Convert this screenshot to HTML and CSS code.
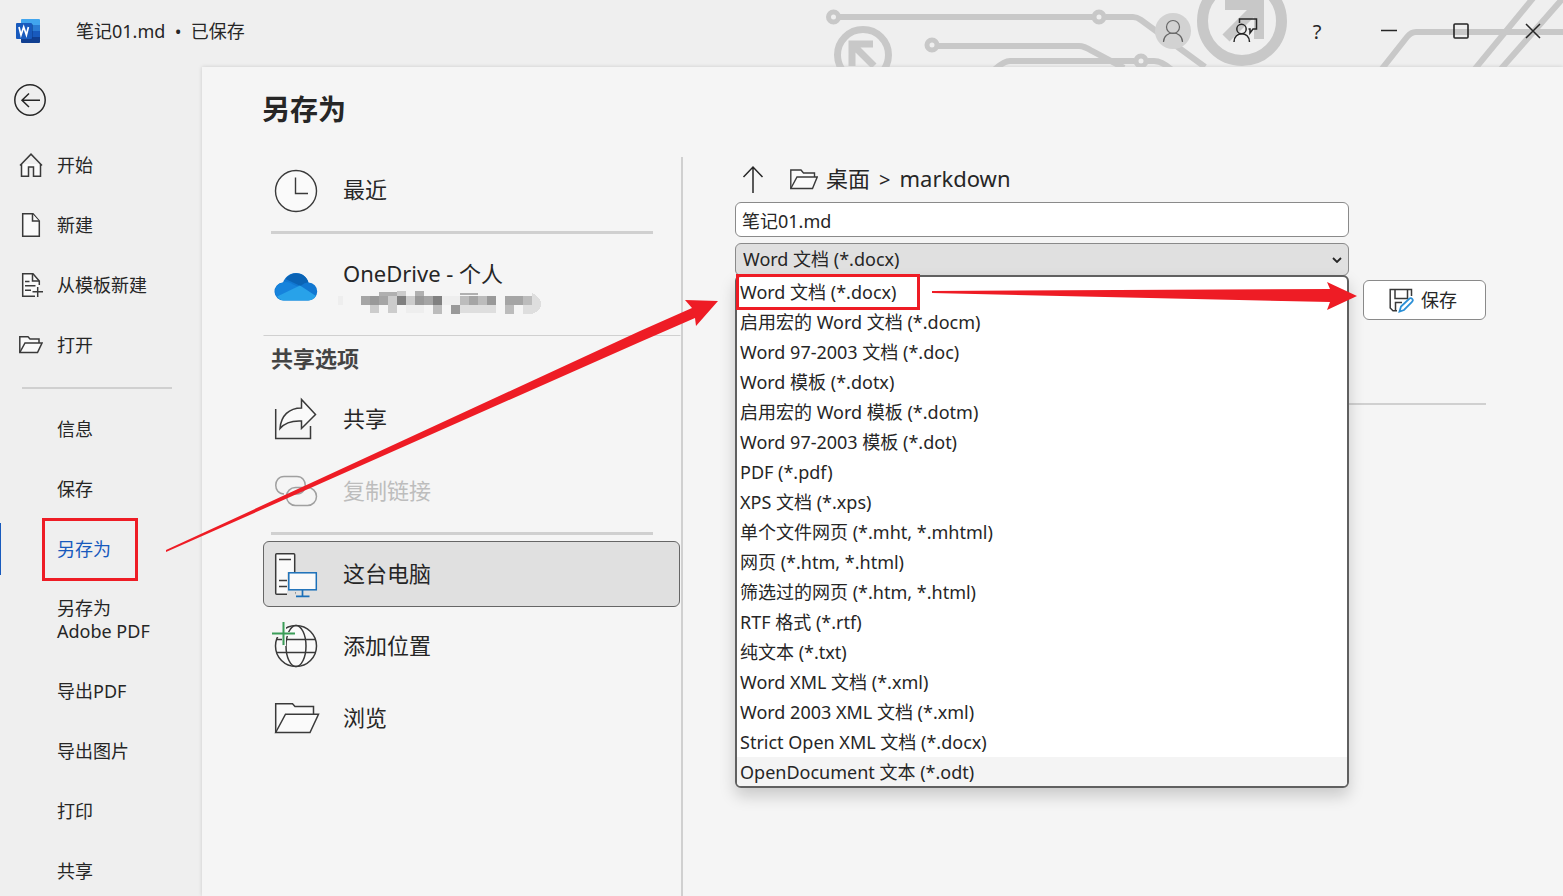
FILE: index.html
```
<!DOCTYPE html>
<html lang="zh-CN">
<head>
  <meta charset="UTF-8">
  <title>另存为</title>
  <link rel="stylesheet" href="styles.css">
</head>
<body>
  <header class="titlebar">
    <svg class="circuit" width="763" height="67" viewBox="800 0 763 67" fill="none" stroke="#c8c8c8" stroke-width="6">
      <path d="M840 17H1092M1106 17H1133Q1137 17 1141 20L1205 67"/>
      <path d="M938 46H1079Q1084 46 1092 51L1124 68"/>
      <path d="M994 70Q1004 61 1010 61H1134M1148 61H1154Q1162 61 1172 70"/>
      <circle cx="833.500" cy="17" r="5" stroke-width="5"/>
      <circle cx="1099" cy="17" r="5" stroke-width="5"/>
      <circle cx="932" cy="45" r="5" stroke-width="5"/>
      <circle cx="1141" cy="61" r="5" stroke-width="5"/>
      <circle cx="863" cy="55" r="25.500" stroke-width="7"/>
      <path d="M873 44H852V66M854 46L874 66" stroke-width="7"/>
      <circle cx="1242" cy="21" r="39.500" stroke-width="11"/>
      <path d="M1225 5H1259V39M1256 8L1226 38" stroke-width="10"/>
      <path d="M1381 70L1407 37Q1411 32 1416 32H1563M1474 70L1534 -3M1500 70L1564 -3"/>
    </svg>
    <svg class="word-logo" width="24" height="24" viewBox="0 0 24 24">
      <path d="M6 0h17a1 1 0 0 1 1 1v5H5V1a1 1 0 0 1 1-1z" fill="#41a5ee"/>
      <path d="M5 6h19v6H5z" fill="#2b7cd3"/>
      <path d="M5 12h19v6H5z" fill="#185abd"/>
      <path d="M5 18h19v5a1 1 0 0 1-1 1H6a1 1 0 0 1-1-1z" fill="#103f91"/>
      <path d="M5 5h11a1 1 0 0 1 1 1v14H5z" fill="#0b3a85" opacity=".5"/>
      <rect y="4" width="16" height="16" rx="1" fill="#185abd"/>
      <path d="M3 8l2 8 2.700-8 2.700 8 2-8" fill="none" stroke="#fff" stroke-width="1.700"/>
    </svg>
    <span class="doc-name">笔记01.md&nbsp; •&nbsp; 已保存</span>
    <div class="window-buttons">
      <button class="avatar" aria-label="账户">
        <svg width="36" height="36" viewBox="0 0 36 36" fill="none" stroke="#666" stroke-width="1.200"><circle cx="18" cy="14" r="6.500"/><path d="M8.500 29c0-12 19-12 19 0"/></svg>
      </button>
      <button aria-label="反馈">
        <svg width="36" height="36" viewBox="0 0 36 36" fill="none" stroke="#262626" stroke-width="1.500"><circle cx="14.500" cy="16" r="4.700"/><path d="M7 29c0-11 15.500-11 15.500 0"/><path d="M12.500 10V6H29.500V16H26L23 20V16H21.500"/></svg>
      </button>
      <button class="help" aria-label="帮助">?</button>
      <button aria-label="最小化">
        <svg width="36" height="36" viewBox="0 0 36 36" stroke="#262626" stroke-width="1.500"><path d="M10 17.500H26"/></svg>
      </button>
      <button aria-label="最大化">
        <svg width="36" height="36" viewBox="0 0 36 36" fill="none" stroke="#262626" stroke-width="1.600"><rect x="11" y="11" width="14" height="14" rx="1"/></svg>
      </button>
      <button aria-label="关闭">
        <svg width="36" height="36" viewBox="0 0 36 36" stroke="#262626" stroke-width="1.500"><path d="M11 11L25 25M25 11L11 25"/></svg>
      </button>
    </div>
  </header>

  <div class="backstage">
    <nav class="sidebar">
      <button class="back" aria-label="返回">
        <svg width="32" height="32" viewBox="0 0 32 32" fill="none" stroke="#262626" stroke-width="1.500"><circle cx="16" cy="16" r="15.200"/><path d="M26 16.300H8M15 9.500L8 16.300L15 23"/></svg>
      </button>
      <a href="#" class="nav-item">
        <svg width="24" height="24" viewBox="0 0 24 24" fill="#fafafa" stroke="#3a3a3a" stroke-width="1.500"><path d="M2.500 11V23.200H9.500V14H14.500V23.200H21.500V11"/><path d="M1 12.500L12 1.200L23 12.500" fill="none"/></svg>
        开始
      </a>
      <a href="#" class="nav-item">
        <svg width="24" height="24" viewBox="0 0 24 24" fill="#fafafa" stroke="#3a3a3a" stroke-width="1.500"><path d="M3.700 .800H14L20.300 8V23.200H3.700z"/><path d="M13.500 1V8H20"/></svg>
        新建
      </a>
      <a href="#" class="nav-item">
        <svg width="24" height="24" viewBox="0 0 24 24" fill="none" stroke="#3a3a3a" stroke-width="1.500"><path d="M3.700 .800H14L20.300 8V23.200H3.700z" fill="#fafafa" stroke="none"/><path d="M16 23.200H3.700V.800H14L20.300 8V12"/><path d="M13.500 1V8H20M6 8.500H10.500M6 12.700H16.500M6 17.300H12"/><path d="M18.700 14V24M13.500 18.700H24"/></svg>
        从模板新建
      </a>
      <a href="#" class="nav-item">
        <svg width="24" height="24" viewBox="0 0 24 24" fill="#fafafa" stroke="#3a3a3a" stroke-width="1.500"><path d="M.800 19.500V3.800H9L11 6H20V10"/><path d="M.800 19.500L6 10H23L18.500 19.500z"/></svg>
        打开
      </a>
      <hr>
      <a href="#" class="nav-item">信息</a>
      <a href="#" class="nav-item">保存</a>
      <a href="#" class="nav-item selected">另存为</a>
      <a href="#" class="nav-item two-lines">另存为<br>Adobe PDF</a>
      <a href="#" class="nav-item">导出PDF</a>
      <a href="#" class="nav-item">导出图片</a>
      <a href="#" class="nav-item">打印</a>
      <a href="#" class="nav-item">共享</a>
    </nav>

    <main class="content">
      <h1>另存为</h1>
      <div class="columns">
        <section class="places">
          <button class="place">
            <svg width="48" height="48" viewBox="0 0 48 48" fill="none" stroke="#3a3a3a" stroke-width="1.400"><circle cx="24" cy="25" r="20.500" fill="#fafafa"/><path d="M23.500 11.500V27.500H36"/></svg>
            最近
          </button>
          <hr>
          <button class="place onedrive">
            <svg width="48" height="48" viewBox="0 0 48 48">
              <path d="M12 36.500a9 9 0 0 1-1-18C13 13 18 9 24 9c6 0 11 4 12.500 9.500a9 9 0 0 1-.500 18z" fill="#1177d1"/>
              <path d="M13.500 15c6-9 20-7 23 3.500-3 0-5 1-8 3.500L13.500 15z" fill="#0a63b5"/>
              <path d="M11 18.500c4-1 7 0 10 2l6 2.500-22 9.500c-4-6-1-13 6-14z" fill="#1683dc"/>
              <path d="M5 32.500L28 21.500l16 10.500c-2 3-5 4.500-8 4.500H12c-3 0-5-1.500-7-4z" fill="#28a2e9"/>
            </svg>
            <span class="account">
              OneDrive - 个人
              <svg width="204" height="24" viewBox="338 291 204 24" shape-rendering="crispEdges">
                <path fill="#eee" d="M338 296h5v9h-5zM442 296h18v9h-18zM406 305h18v8h-18z"/>
                <path fill="#b0b0b0" d="M379 292h18v4h-18zM415 291h9v5h-9zM460 293h18v2h-18z"/>
                <path fill="#ccc" d="M397 291h9v5h-9zM388 296h9v9h-9zM406 296h9v9h-9zM370 305h9v8h-9zM388 305h9v8h-9z"/>
                <path fill="#a5a5a5" d="M361 296h9v9h-9zM379 296h9v9h-9zM424 296h9v9h-9zM469 296h9v9h-9zM505 296h18v9h-18z"/>
                <path fill="#999" d="M370 296h9v9h-9zM415 296h9v9h-9zM487 296h9v9h-9zM451 305h9v9h-9z"/>
                <path fill="#808080" d="M397 296h9v9h-9zM433 296h9v9h-9z"/>
                <path fill="#bcbcbc" d="M460 296h9v9h-9zM478 296h9v9h-9zM523 296h9v9h-9zM433 305h9v9h-9zM505 305h9v9h-9z"/>
                <path fill="#dedede" d="M460 305h36v8h-36zM523 305h9v9h-9zM532 293q9 4 9 11t-9 10z"/>
              </svg>
            </span>
          </button>
          <h2>共享选项</h2>
          <button class="place">
            <svg width="48" height="48" viewBox="0 0 48 48" fill="none" stroke="#3a3a3a" stroke-width="1.500"><path d="M3.700 14V43.500H38.500V31"/><path d="M8 33.500C9 20.500 17 13 29.500 13V4.500L43.500 19.500L29.500 33.500V26C20 25.500 13 27.500 8 33.500z" fill="#fafafa"/></svg>
            共享
          </button>
          <button class="place" disabled>
            <svg width="48" height="48" viewBox="0 0 48 48" fill="none" stroke="#a0a0a0" stroke-width="1.500"><path d="M12 27C1 27 1 9.500 12 9.500H25C36 9.500 36 27 25 27H20"/><rect x="14.500" y="20.500" width="30" height="18" rx="9"/></svg>
            复制链接
          </button>
          <hr>
          <button class="place current">
            <svg width="48" height="48" viewBox="0 0 48 48" fill="#fafafa" stroke="#3a3a3a" stroke-width="1.500"><rect x="3.700" y="3.700" width="19" height="40.500" rx="1"/><path d="M7 9.500H19M7 30.500H15M7 36.500H15"/><path d="M15 22h30v20h-22v4h-8z" fill="#e0e0e0" stroke="none"/><rect x="16.800" y="22.800" width="27.500" height="17" stroke="#1a6fb8"/><path d="M30.500 40V46M24 46.300H37.500" stroke="#1a6fb8" stroke-width="1.700"/></svg>
            这台电脑
          </button>
          <button class="place">
            <svg width="48" height="48" viewBox="0 0 48 48" fill="none" stroke="#3a3a3a" stroke-width="1.500"><circle cx="24" cy="24" r="20.500" fill="#fafafa"/><ellipse cx="24" cy="24" rx="10" ry="20.500"/><path d="M5 17.500H43M5 30.500H43"/><path d="M0 0H14V10H22V14H14V24H10V15H0z" fill="#f5f5f5" stroke="none"/><path d="M11.500 0V23M0 11.500H23" stroke="#3b9d58" stroke-width="2"/></svg>
            添加位置
          </button>
          <button class="place">
            <svg width="48" height="48" viewBox="0 0 48 48" fill="#fafafa" stroke="#3a3a3a" stroke-width="1.500"><path d="M3.700 38.500V9.700H20.500L23 12.500H41.500V20"/><path d="M3.700 38.500L13.500 20.200H46.500L38 38.500z"/></svg>
            浏览
          </button>
        </section>

        <section class="save-panel">
          <div class="path">
            <button class="up" aria-label="上一级">
              <svg width="24" height="32" viewBox="0 0 24 32" fill="none" stroke="#262626" stroke-width="1.500"><path d="M12 29V3M2.500 13L12 3L21.500 13"/></svg>
            </button>
            <svg width="28" height="22" viewBox="0 0 28 22" fill="#fafafa" stroke="#3a3a3a" stroke-width="1.400"><path d="M.800 19.500V1H11L13.500 4H24.500V8"/><path d="M.800 19.500L7 8H27.200L22.500 19.500z"/></svg>
            <span class="path-text">桌面<span class="sep">&gt;</span>markdown</span>
          </div>
          <div class="save-row">
            <div class="fields">
              <input type="text" value="笔记01.md" aria-label="文件名">
              <div class="type-box">
                <select aria-label="保存类型">
                  <option>Word 文档 (*.docx)</option>
                </select>
                <svg class="chevron" width="10" height="6" viewBox="0 0 10 6" fill="none" stroke="#262626" stroke-width="1.800"><path d="M1 1L5 5L9 1"/></svg>
                <ul class="type-list" role="listbox" aria-label="保存类型">
                  <li role="option" class="marked">Word 文档 (*.docx)</li>
                  <li role="option">启用宏的 Word 文档 (*.docm)</li>
                  <li role="option">Word 97-2003 文档 (*.doc)</li>
                  <li role="option">Word 模板 (*.dotx)</li>
                  <li role="option">启用宏的 Word 模板 (*.dotm)</li>
                  <li role="option">Word 97-2003 模板 (*.dot)</li>
                  <li role="option">PDF (*.pdf)</li>
                  <li role="option">XPS 文档 (*.xps)</li>
                  <li role="option">单个文件网页 (*.mht, *.mhtml)</li>
                  <li role="option">网页 (*.htm, *.html)</li>
                  <li role="option">筛选过的网页 (*.htm, *.html)</li>
                  <li role="option">RTF 格式 (*.rtf)</li>
                  <li role="option">纯文本 (*.txt)</li>
                  <li role="option">Word XML 文档 (*.xml)</li>
                  <li role="option">Word 2003 XML 文档 (*.xml)</li>
                  <li role="option">Strict Open XML 文档 (*.docx)</li>
                  <li role="option" class="hover">OpenDocument 文本 (*.odt)</li>
                </ul>
              </div>
            </div>
            <button class="save">
              <svg width="25" height="25" viewBox="0 0 25 25" fill="none" stroke="#3a3a3a" stroke-width="1.500"><path d="M22.500 8V1.500H1.200V20L4 22.700H8"/><path d="M6 1.500V10.500H18.500V1.500M6.500 22V14.500H13"/><path d="M10.500 23.500L12 18.500L20.500 10.500Q22 9.500 23.300 11Q24.500 12.500 23 13.800L15 22z" fill="#fff" stroke="#2b8fd6" stroke-width="1.800"/></svg>
              保存
            </button>
          </div>
        </section>
      </div>
    </main>
  </div>

  <svg class="arrows" width="1563" height="896" viewBox="0 0 1563 896" fill="#ee1c25">
    <path d="M166 550L640 331L692 308L685 300L718 301L696 326L695 318L640 342L166 552z"/>
    <path d="M932 291L1330 289L1327 282L1357 296L1327 310L1330 302L932 293z"/>
  </svg>
</body>
</html>
```
FILE: styles.css
```
*,
*::before,
*::after {
  box-sizing: border-box;
}

body {
  margin: 0;
  height: 100vh;
  overflow: hidden;
  display: flex;
  flex-direction: column;
  position: relative;
  background: #efefef;
  color: #262626;
  font-family: "Noto Sans", "Noto Sans CJK SC", sans-serif;
  font-size: 18px;
}

button,
input,
select {
  font: inherit;
  color: inherit;
}

button {
  padding: 0;
  border: none;
  background: none;
}

svg {
  display: block;
  flex: none;
}

hr {
  margin: 0;
  border: none;
  background: #d0d0d0;
}

/* title bar */
.titlebar {
  position: relative;
  height: 67px;
  flex: none;
  display: flex;
  align-items: center;
  padding: 0 12px 5px 16px;
}

.circuit {
  position: absolute;
  top: 0;
  right: 0;
}

.doc-name {
  margin: 0 0 2px 36px;
}

.window-buttons {
  position: relative;
  margin-left: auto;
  display: flex;
  gap: 36px;
}

.window-buttons button {
  width: 36px;
  height: 36px;
}

.window-buttons .avatar {
  border-radius: 50%;
  background: #d2d2d2;
}

.window-buttons .help {
  font-size: 20px;
}

/* sidebar */
.backstage {
  flex: 1;
  min-height: 0;
  display: flex;
}

.sidebar {
  width: 202px;
  flex: none;
  padding-top: 17px;
  overflow: hidden;
}

.back {
  display: block;
  margin: 0 0 19px 14px;
}

.nav-item {
  position: relative;
  display: flex;
  align-items: center;
  gap: 14px;
  height: 60px;
  padding: 0 0 2px 19px;
  color: inherit;
  text-decoration: none;
}

.nav-item svg {
  margin-top: 2px;
}

.sidebar hr {
  height: 2px;
  margin: 12px 30px 10px 22px;
}

.sidebar hr ~ .nav-item {
  padding-left: 57px;
}

.nav-item.two-lines {
  display: block;
  height: 82px;
  padding-top: 18px;
  line-height: 23px;
}

.nav-item.selected {
  color: #185abd;
}

.nav-item.selected::before {
  content: "";
  position: absolute;
  left: 0;
  top: 4px;
  width: 1px;
  height: 52px;
  background: #185abd;
}

.nav-item.selected::after {
  content: "";
  position: absolute;
  left: 42px;
  top: -1px;
  width: 96px;
  height: 63px;
  border: 3px solid #ee1c25;
}

/* content */
.content {
  flex: 1;
  min-width: 0;
  display: flex;
  flex-direction: column;
  padding: 22px 77px 0 60px;
  background: #f5f5f5;
  box-shadow: 0 0 4px rgba(0, 0, 0, 0.15);
}

h1 {
  margin: 0 0 28px;
  font-size: 28px;
  line-height: 40px;
}

.columns {
  flex: 1;
  min-height: 0;
  display: flex;
}

.places {
  width: 421px;
  flex: none;
  border-right: 2px solid #d0d0d0;
  font-size: 22px;
}

.place {
  width: 417px;
  height: 66px;
  margin: 0 0 6px 1px;
  padding: 0 0 4px 8px;
  display: flex;
  align-items: center;
  gap: 23px;
  border: 1px solid transparent;
  border-radius: 6px;
  text-align: left;
}

.place > svg {
  margin-top: 4px;
}

.place:disabled {
  color: #bdbdbd;
}

.place.current {
  border-color: #666;
  background: #e0e0e0;
}

.places hr {
  height: 3px;
  margin: 8px 28px 6px 9px;
}

.place.onedrive {
  width: 418px;
  height: 96px;
  margin-bottom: 0;
  border-bottom: 1px solid #d0d0d0;
  border-radius: 0;
}

.account {
  line-height: 32px;
}

.account svg {
  margin: 2px 0 0 -5px;
}

h2 {
  margin: 0 0 6px 9px;
  font-size: 22px;
  line-height: 44px;
  color: #444;
}

.save-panel {
  flex: 1;
  min-width: 0;
  padding-left: 52px;
}

.path {
  height: 45px;
  display: flex;
  align-items: center;
  gap: 8px;
  padding-left: 6px;
  font-size: 22px;
}

.up {
  margin-right: 17px;
}

.path-text {
  margin-bottom: 5px;
}

.sep {
  margin: 0 9px;
  font-size: 20px;
}

.save-row {
  display: flex;
  align-items: flex-start;
  gap: 14px;
  padding-bottom: 83px;
  border-bottom: 2px solid #d0d0d0;
}

.fields {
  flex: 1;
  min-width: 0;
}

.fields input {
  display: block;
  width: 100%;
  height: 35px;
  margin-bottom: 6px;
  padding: 0 6px;
  border: 1px solid #8a8a8a;
  border-radius: 6px;
  background: #fff;
}

.type-box {
  position: relative;
}

.type-box select {
  display: block;
  width: 100%;
  height: 33px;
  padding: 0 7px 2px;
  appearance: none;
  border: 1px solid #8a8a8a;
  border-radius: 6px;
  background: #e0e0e0;
}

.chevron {
  position: absolute;
  right: 7px;
  top: 14px;
  pointer-events: none;
}

.type-list {
  position: absolute;
  top: 32px;
  left: 0;
  right: 0;
  margin: 0;
  padding: 0;
  list-style: none;
  border: 2px solid #606060;
  border-radius: 6px;
  background: #fff;
  box-shadow: 0 8px 16px rgba(0, 0, 0, 0.18);
}

.type-list li {
  position: relative;
  height: 30px;
  line-height: 30px;
  padding-left: 3px;
}

.type-list .hover {
  height: 29px;
  background: #f4f4f4;
  border-radius: 0 0 4px 4px;
}

.type-list .marked::after {
  content: "";
  position: absolute;
  left: -1px;
  top: -3px;
  width: 184px;
  height: 36px;
  border: 3px solid #ee1c25;
}

.save {
  width: 123px;
  height: 40px;
  margin-top: 78px;
  padding: 0 3px 2px 0;
  display: flex;
  align-items: center;
  justify-content: center;
  gap: 7px;
  border: 1px solid #8a8a8a;
  border-radius: 6px;
  background: #fff;
}

.save svg {
  margin-top: 2px;
}

.arrows {
  position: absolute;
  top: 0;
  left: 0;
  pointer-events: none;
}
```
